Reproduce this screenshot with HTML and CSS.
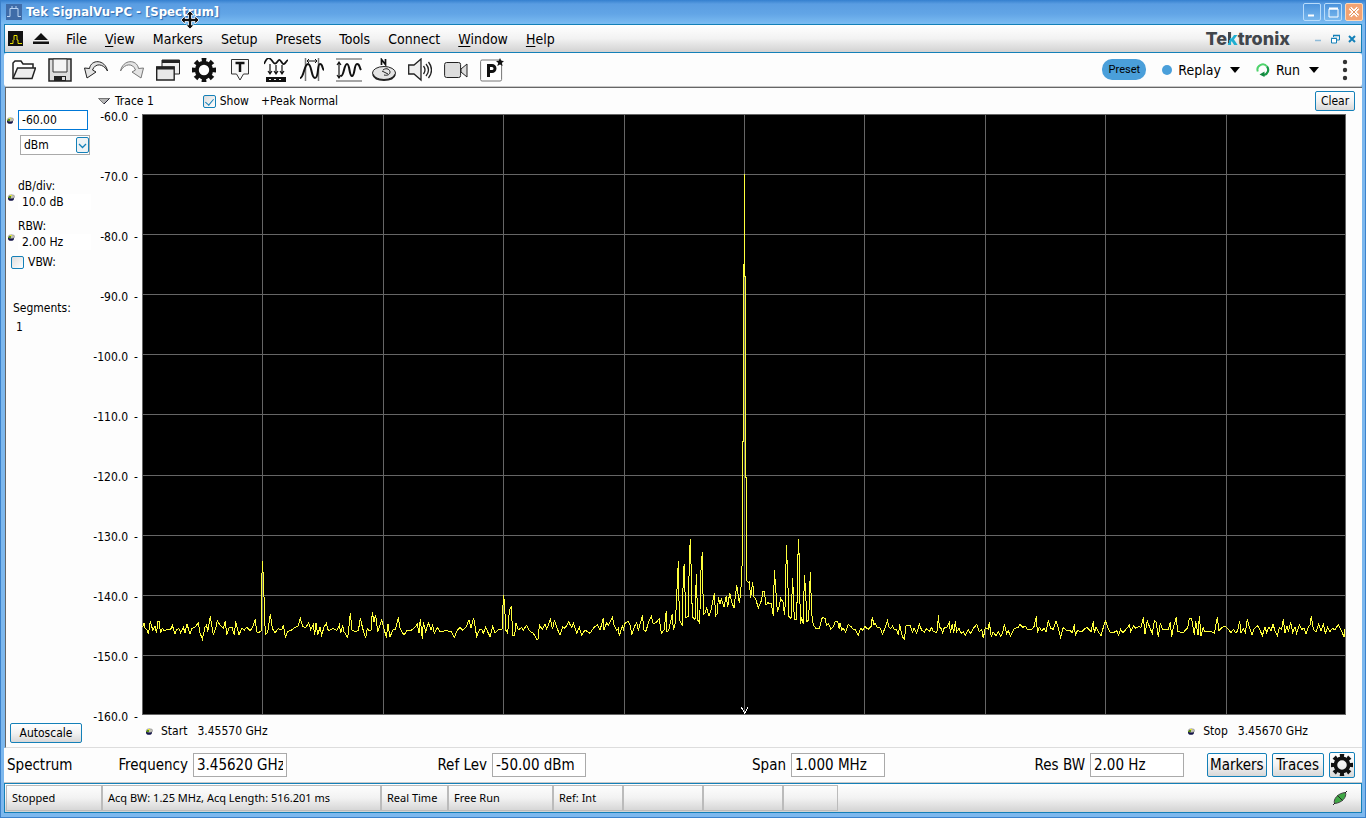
FILE: index.html
```html
<!DOCTYPE html>
<html lang="en">
<head>
<meta charset="utf-8">
<title>Tek SignalVu-PC - [Spectrum]</title>
<link rel="stylesheet" href="styles.css">
</head>
<body>
<svg class="defs" aria-hidden="true">
  <symbol id="gear" viewBox="0 0 24 24">
    <circle cx="12" cy="12" r="7.2" fill="none" stroke="#111" stroke-width="4"/>
    <g fill="#111">
      <path id="tooth" d="M9.500 0h5l-.6 4.500h-3.800z"/>
      <use href="#tooth" transform="rotate(45 12 12)"/><use href="#tooth" transform="rotate(90 12 12)"/>
      <use href="#tooth" transform="rotate(135 12 12)"/><use href="#tooth" transform="rotate(180 12 12)"/>
      <use href="#tooth" transform="rotate(225 12 12)"/><use href="#tooth" transform="rotate(270 12 12)"/>
      <use href="#tooth" transform="rotate(315 12 12)"/>
    </g>
  </symbol>
  <symbol id="knob" viewBox="0 0 8 7">
    <ellipse cx="4" cy="4.400" rx="3" ry="2.300" fill="#14144a"/>
    <ellipse cx="4.500" cy="2.600" rx="3.200" ry="1.900" fill="#c2c2b8" stroke="#777" stroke-width=".5"/>
    <path d="M1 3.500h3M2 2.500h2" stroke="#5f8f14"/><path d="M3 1.500h2" stroke="#e6e630"/>
  </symbol>
</svg>
<div class="window">
  <header class="titlebar">
    <svg class="app-icon" viewBox="0 0 16 16"><rect width="16" height="16" fill="#3f6ca8"/><path d="M1 12.500h3v-8h8v8h3M6 4.500V2M10 4.500V2" fill="none" stroke="#b9d3f2"/></svg>
    <h1 class="title">Tek SignalVu-PC - [Spectrum]</h1>
    <button class="win-btn" aria-label="Minimize"><svg viewBox="0 0 16 16"><path d="M4 11.500h6" stroke="#fff" stroke-width="2"/></svg></button>
    <button class="win-btn" aria-label="Maximize"><svg viewBox="0 0 16 16"><path d="M4 5h9v8H4z" fill="none" stroke="#fff"/><path d="M4 4.500h9" stroke="#fff" stroke-width="2"/></svg></button>
    <button class="win-btn close" aria-label="Close"><svg viewBox="0 0 16 16"><path d="M4 4l8 8M12 4l-8 8" stroke="#fff" stroke-width="3.500"/><path d="M4 4l8 8M12 4l-8 8" stroke="#e0905c" stroke-width="1"/></svg></button>
    <svg class="pointer" viewBox="0 0 18 18"><path d="M9 0l4 4h-2.500v3.500H14V5l4 4-4 4v-2.500h-3.500V14H13l-4 4-4-4h2.500v-3.500H4V13L0 9l4-4v2.500h3.500V4H5z" fill="#111" stroke="#fff" stroke-width=".8"/></svg>
  </header>

  <nav class="menubar">
    <svg class="doc-icon" viewBox="0 0 15 15"><rect width="15" height="15" fill="#111"/><path d="M2 12.500h3V9M6 9V4.500h3V9h1v3.500h4" fill="none" stroke="#e8e000"/></svg>
    <svg class="eject" viewBox="0 0 16 11"><path d="M8 0l7 7H1zM0 8.500h16V11H0z" fill="#111"/></svg>
    <button class="menu">File</button>
    <button class="menu"><u>V</u>iew</button>
    <button class="menu">Markers</button>
    <button class="menu">Setup</button>
    <button class="menu">Presets</button>
    <button class="menu">Tools</button>
    <button class="menu">Connect</button>
    <button class="menu"><u>W</u>indow</button>
    <button class="menu"><u>H</u>elp</button>
    <span class="brand">Te<span class="brand-k">k</span>tronix</span>
    <button class="mdi" aria-label="Minimize view"><svg viewBox="0 0 10 10"><path d="M2 6.500h6" stroke="#8fbbd8" stroke-width="1.500"/></svg></button>
    <button class="mdi" aria-label="Restore view"><svg viewBox="0 0 10 10"><path d="M3.500 3V1.500h6V6H7" fill="none" stroke="#1480b8"/><path d="M3 1.500h7M1 4.500h6" stroke="#1480b8" stroke-width="1.500"/><path d="M1.500 4.500h5V9h-5z" fill="#fff" stroke="#1480b8"/></svg></button>
    <button class="mdi" aria-label="Close view"><svg viewBox="0 0 10 10"><path d="M2 2l6 6M8 2L2 8" stroke="#1480b8" stroke-width="2"/></svg></button>
  </nav>

  <div class="toolbar">
    <button class="tool" aria-label="Open"><svg viewBox="0 0 24 24"><path d="M1 20V5l2-2h6l2 3h10v4" fill="#fff" stroke="#222" stroke-width="1.500"/><path d="M1 20.500L5.500 10H23.500L20 20.500z" fill="#eee" stroke="#222" stroke-width="1.500"/></svg></button>
    <button class="tool" aria-label="Save"><svg viewBox="0 0 24 24"><path d="M1 1h22v22H1z" fill="#ddd" stroke="#222" stroke-width="1.500"/><path d="M5 1h14v13H5z" fill="#f4f4f4" stroke="#333"/><path d="M6 18h12v5H6z" fill="#222"/><path d="M14 19h3v3h-3z" fill="#ddd"/></svg></button>
    <button class="tool" aria-label="Undo"><svg viewBox="0 0 24 24"><path d="M23.500 13C21 1 7 1 5.500 10.500L.5 10l2.500 10 9-6-3.500-2C11 5 19 5 23.500 13z" fill="#e4e4e4" stroke="#222"/></svg></button>
    <button class="tool" aria-label="Redo"><svg viewBox="0 0 24 24"><path d="M.5 13C3 1 17 1 18.500 10.500l5-.5L21 20l-9-6 3.500-2C13 5 5 5 .5 13z" fill="#e4e4e4" stroke="#777"/></svg></button>
    <button class="tool" aria-label="Displays"><svg viewBox="0 0 24 24"><path d="M6 2h17.500v14H6z" fill="#eee" stroke="#222"/><path d="M6 3.500h17.500" stroke="#222" stroke-width="3"/><path d="M.7 9h17.500v13H.7z" fill="#e8e8e8" stroke="#222" stroke-width="1.400"/><path d="M.5 10h18" stroke="#222" stroke-width="3"/></svg></button>
    <button class="tool" aria-label="Settings"><svg viewBox="0 0 24 24"><use href="#gear"/></svg></button>
    <button class="tool" aria-label="Trigger"><svg viewBox="0 0 24 24"><path d="M3.500 1.500h17V16h-5L12 22 8.500 16h-5z" fill="#f7f7f7" stroke="#333"/><path d="M7.500 5h9M12 5v9" stroke="#111" stroke-width="2.500"/></svg></button>
    <button class="tool" aria-label="Acquire"><svg viewBox="0 0 24 24"><path d="M0 6C4-3 6 0 9 4s4-1 6-2 3 5 5 4 2-3 4-4" fill="none" stroke="#111" stroke-width="1.800"/><path d="M6 6v10M12 7v9M18 7v9M4 13l2 3 2-3M10 13l2 3 2-3M16 13l2 3 2-3" fill="none" stroke="#111" stroke-width="1.200"/><path d="M2 19h20v5H2z" fill="#111"/><path d="M5 21.500h15" stroke="#eee" stroke-dasharray="2 3"/></svg></button>
    <button class="tool" aria-label="Analysis time"><svg viewBox="0 0 24 24"><path d="M5.500 0v23M18.500 0v23" stroke="#777" stroke-width="1.500"/><path d="M0 20C4 20 4 6 8 6s3 14 7 14 2-14 5-14 2 5 4 6" fill="none" stroke="#111" stroke-width="2"/><path d="M7 3h10M9 1L7 3l2 2M15 1l2 2-2 2" fill="none" stroke="#111"/></svg></button>
    <button class="tool amplitude" aria-label="Amplitude"><svg viewBox="0 0 26 24"><path d="M0 1h26M0 23h26" stroke="#888" stroke-width="1.500"/><path d="M3 4v16M1 7l2-3 2 3M1 17l2 3 2-3" fill="none" stroke="#111" stroke-width="1.200"/><path d="M5 18C8 18 8 6 11 6s2 12 5 12 2-12 5-12 2 3 4 6" fill="none" stroke="#111" stroke-width="2"/></svg></button>
    <button class="tool" aria-label="Navigation"><svg viewBox="0 0 24 24"><path d="M9.500 7V1.500l4 5V1" fill="none" stroke="#111" stroke-width="1.700"/><ellipse cx="12" cy="15" rx="11.500" ry="6.500" fill="#e4e4e4" stroke="#222"/><path d="M1 16.500c2 7.500 20 7.500 22 0" fill="none" stroke="#222" stroke-width="1.700"/><path d="M11 12c4-3 7 0 7 2s-2 4-6 3M10 13l6 3" fill="none" stroke="#222"/></svg></button>
    <button class="tool" aria-label="Audio"><svg viewBox="0 0 24 24"><path d="M.7 7H6l7-6v21l-7-6H.7z" fill="#eee" stroke="#222" stroke-width="1.300"/><path d="M15.500 8q3 4 0 8M18 6q5 6 0 12M20.500 4q6 8 0 16" fill="none" stroke="#222" stroke-width="1.300"/></svg></button>
    <button class="tool" aria-label="Record"><svg viewBox="0 0 24 24"><rect x=".6" y="4.500" width="16" height="15" rx="2" fill="#ddd" stroke="#222"/><path d="M17 11l6-5v13l-6-5z" fill="#ddd" stroke="#222"/></svg></button>
    <button class="tool" aria-label="Favorite preset"><svg viewBox="0 0 24 24"><rect x=".6" y="2" width="21" height="21" rx="1.500" fill="#fff" stroke="#777"/><path d="M8.500 19V7.500H12a3 3 0 0 1 0 6H9" fill="none" stroke="#111" stroke-width="3"/><path d="M20 0l1.200 2.800 2.800.2-2.200 2 .8 3-2.600-1.600L17.300 8l.9-3L16 3l2.800-.2z" fill="#111"/></svg></button>
    <button class="preset">Preset</button>
    <button class="action replay"><span class="dot"></span>Replay<span class="caret"></span></button>
    <button class="action run"><svg viewBox="0 0 14 14"><path d="M1.800 8.500A5.300 5.300 0 0 1 11 3.500" fill="none" stroke="#4fd36c" stroke-width="2"/><path d="M11 3.500a5.300 5.300 0 0 1-3 8.500" fill="none" stroke="#1a9a48" stroke-width="2.200"/><path d="M8.500 8.500V14L3.500 11.500z" fill="#128a40"/></svg>Run<span class="caret"></span></button>
    <button class="more" aria-label="More"><svg viewBox="0 0 6 22"><circle cx="3" cy="3" r="2.200"/><circle cx="3" cy="11" r="2.200"/><circle cx="3" cy="19" r="2.200"/></svg></button>
  </div>

  <main class="panel">
    <aside class="side">
      <div class="row ref"><svg class="knob"><use href="#knob"/></svg><input class="level" aria-label="Reference level" value="-60.00"></div>
      <div class="unit"><select aria-label="Units"><option>dBm</option></select><svg viewBox="0 0 13 16"><rect x=".5" y=".5" width="12" height="15" rx="1.500" fill="#eef3f6" stroke="#1480b8"/><path d="M3 7l3.500 3.500L10 7" fill="none" stroke="#1480b8" stroke-width="1.300"/></svg></div>
      <div class="param div"><span>dB/div:</span><svg class="knob"><use href="#knob"/></svg><span class="value">10.0 dB</span></div>
      <div class="param"><span>RBW:</span><svg class="knob"><use href="#knob"/></svg><span class="value">2.00 Hz</span></div>
      <label class="vbw"><input type="checkbox">VBW:</label>
      <div class="segments">Segments:</div>
      <div class="count">1</div>
      <button class="button autoscale">Autoscale</button>
    </aside>
    <div class="trace-head">
      <button class="trace"><svg class="expand" viewBox="0 0 12 7"><path d="M.5.5h11L6 6z" fill="#b4b4b4" stroke="#777"/><path d="M11.500.5L6 6" stroke="#223"/></svg>Trace 1</button>
      <label class="show"><input type="checkbox" checked>Show</label>
      <span class="detect">+Peak Normal</span>
      <button class="button clear">Clear</button>
    </div>
    <div class="axis">
      <span>-60.0</span><span>-70.0</span><span>-80.0</span><span>-90.0</span><span>-100.0</span><span>-110.0</span><span>-120.0</span><span>-130.0</span><span>-140.0</span><span>-150.0</span><span>-160.0</span>
    </div>
    <div class="plot">
      <svg viewBox="0 0 3612 1803" preserveAspectRatio="none" role="img" aria-label="Spectrum trace">
        <path class="grid" d="M1 1H3610V1801H1zM1 182H3610M1 362H3610M1 542H3610M1 722H3610M1 902H3610M1 1085H3610M1 1265H3610M1 1445H3610M1 1625H3610M362 1V1801M725 1V1801M1085 1V1801M1448 1V1801M1808 1V1801M2168 1V1801M2531 1V1801M2891 1V1801M3254 1V1801"/>
        <g class="signal">
          <polyline transform="translate(-6 1278)" points="7,262 12,250 15,264 20,268 25,282 31,243 38,270 45,258 50,280 53,245 58,245 61,279 67,265 72,272 85,268 92,268 97,256 105,282 110,268 117,266 122,278 130,262 135,278 141,252 150,283 155,265 165,262 175,248 180,278 187,298 195,262 200,255 203,277 211,229 220,285 228,262 232,242 240,255 250,265 256,243 260,286 268,262 276,262 283,286 287,244 297,285 305,265 313,270 320,262 330,272 338,262 346,238 350,275 356,278 364,272 364,170 367,64 370,110 373,200 376,283 383,278 391,222 397,265 405,278 415,266 425,270 430,254 436,292 443,275 455,270 465,262 475,258 481,235 488,260 498,262 506,248 512,268 520,252 524,285 528,250 533,284 540,262 545,285 552,262 559,250 565,272 580,265 590,272 598,255 602,280 608,255 612,275 623,293 628,250 631,220 636,270 645,275 655,272 661,235 668,265 677,295 682,265 687,272 693,270 697,217 702,245 707,224 713,275 720,255 725,240 730,258 739,293 744,252 750,292 758,270 766,268 775,232 780,265 792,286 800,272 815,270 825,262 832,252 837,280 841,236 847,298 850,245 857,275 865,248 873,270 878,255 883,280 892,262 900,275 920,272 935,276 943,292 952,270 960,262 968,270 978,262 987,240 993,265 1001,233 1010,290 1018,270 1025,268 1030,280 1037,262 1050,290 1058,258 1065,280 1075,268 1086,270 1088,210 1091,166 1094,195 1097,270 1103,280 1108,212 1114,199 1118,285 1124,285 1128,250 1135,270 1145,262 1150,270 1160,256 1168,272 1180,280 1190,298 1195,297 1198,255 1207,268 1215,252 1220,268 1231,238 1238,268 1243,240 1250,262 1260,285 1268,260 1275,265 1286,246 1295,262 1300,250 1310,280 1318,262 1325,285 1335,270 1350,280 1362,262 1372,255 1380,270"/>
          <polyline transform="translate(1374 1218)" points="0,330 10,295 12,330 20,308 25,316 37,292 43,318 50,332 55,325 58,348 67,318 70,328 75,310 85,304 91,318 95,344 103,320 110,308 115,330 121,310 127,286 132,330 138,334 145,308 154,290 160,312 168,308 178,296 184,340 192,330 199,272 201,335 206,332 215,290 217,283 220,330 226,310 230,230 235,123 238,300 247,315 250,150 253,132 257,293 265,290 268,110 271,57 274,165 277,290 285,298 289,162 293,300 299,310 303,150 307,96 310,283 315,280 320,265 327,287 333,270 343,220 347,287 352,280 355,232 360,252 364,238 372,260 379,227 383,262 389,218 395,245 402,265 410,195 413,215 418,248 422,220"/>
          <polyline points="1796,1438 1799,1386 1802,1305 1802,981 1805,981 1805,450 1808,450 1808,180 1808,486 1811,486 1811,1089 1814,1089 1814,1401"/>
          <polyline transform="translate(1374 1218)" points="440,181 446,188 448,183 452,233 458,187 462,230 468,240 475,264 485,240 488,215 493,215 498,255 504,248 508,252 514,250 520,287 523,150 527,205 532,275 537,262 542,235 550,248 553,285 556,250 559,75 563,160 566,288 573,295 578,174 583,300 590,297 595,57 598,120 601,313 605,292 610,312 613,165 617,210 620,305 626,300 631,156 635,280 640,315 648,325 658,325 667,292 675,295 680,316 686,312 692,327 700,320 706,304 713,305 718,328 720,308"/>
          <polyline transform="translate(2094 1428)" points="0,98 5,120 10,115 17,126 25,103 33,110 40,118 45,118 55,136 62,115 68,120 75,110 85,118 93,110 97,82 102,105 105,98 112,112 122,115 127,133 135,115 142,92 147,112 153,115 158,108 163,118 170,118 175,136 179,103 187,140 193,148 198,108 210,105 217,127 222,115 230,130 238,103 245,120 253,127 260,115 268,125 275,112 280,125 290,127 293,112 295,75 298,112 303,115 308,130 313,112 320,112 328,97 331,128 337,102 341,130 346,94 350,125 357,115 363,130 370,125 376,135 385,120 392,130 398,118 410,103 418,125 425,118 430,145 436,112 445,118 448,97 454,142 459,125 468,138 475,125 482,138 488,128 493,103 500,130 505,122 511,139 523,115 535,112 540,103 548,112 557,108 562,118 575,118 582,110 589,79 592,128 598,112 605,122 612,115 618,125 625,91 632,115 640,118 648,94 655,115 662,142 670,112 680,122 690,122 697,128 703,103 706,138 712,122 725,125 732,118 740,112 747,118 753,125 760,94 763,130 768,110 775,125 783,137 790,112 797,92 805,118 812,128 820,128 830,122 836,136 842,118 848,128 858,118 868,105 872,125 880,108 887,115 895,110 903,112 910,82 915,132 922,92 930,115 937,130 943,92 948,95 955,140 961,100 967,118 985,118 991,97 995,142 1000,112 1009,82 1013,125 1030,128 1038,118 1043,115 1048,85 1055,85 1063,136 1067,92 1074,135 1078,79 1083,138 1090,112 1093,125 1115,125 1123,130 1132,82 1137,122 1143,115 1155,108 1165,118 1173,128 1180,118 1187,128 1193,122 1199,94 1203,128 1210,115 1216,128 1222,88 1228,112 1236,134 1243,115 1253,108 1260,120 1267,137 1275,112 1280,128 1287,110 1293,122 1299,103 1306,125 1312,138 1318,112 1325,118 1330,88 1335,128 1341,108 1345,125 1352,97 1358,128 1365,110 1370,130 1378,105 1385,118 1392,115 1398,132 1405,110 1410,105 1414,79 1420,118 1428,125 1436,103 1443,122 1450,103 1456,130 1463,112 1470,125 1477,115 1485,120 1495,103 1502,118 1512,140 1515,118"/>
        </g>
        <path class="center" d="M1798 1780L1808 1798L1818 1780"/>
      </svg>
    </div>
    <div class="range">
      <span class="edge"><svg class="knob"><use href="#knob"/></svg>Start<span>3.45570 GHz</span></span>
      <span class="edge"><svg class="knob"><use href="#knob"/></svg>Stop<span>3.45670 GHz</span></span>
    </div>
  </main>

  <form class="settings">
    <div class="first"><span>Spectrum</span><label>Frequency<input value="3.45620 GHz"></label></div>
    <label>Ref Lev<input value="-50.00 dBm"></label>
    <label>Span<input value="1.000 MHz"></label>
    <label>Res BW<input value="2.00 Hz"></label>
    <div class="actions">
      <button type="button" class="button">Markers</button>
      <button type="button" class="button">Traces</button>
      <button type="button" class="button gear" aria-label="Spectrum settings"><svg viewBox="0 0 24 24"><use href="#gear"/></svg></button>
    </div>
  </form>

  <footer class="status">
    <span class="c1">Stopped</span><span class="c2">Acq BW: 1.25 MHz, Acq Length: 516.201 ms</span><span class="c3">Real Time</span><span class="c4">Free Run</span><span class="c5">Ref: Int</span><span class="c6"></span><span class="c6"></span><span class="c7"></span>
    <svg class="link" viewBox="0 0 14 14"><path d="M1.500 12.500C0 8 5 2 12.500 1.500 14 6 9 12 1.500 12.500z" fill="#3fa845" stroke="#444"/><path d="M0 14l2-2M12 2l2-2M4.500 4.500l5 5" stroke="#222"/></svg>
  </footer>
</div>
</body>
</html>
```

FILE: styles.css
```css
* { box-sizing: border-box; }
body {
  margin: 0;
  font: 12px/16px "DejaVu Sans Condensed", "DejaVu Sans", sans-serif;
  font-stretch: condensed;
  color: #000;
}
button, input, select { font: inherit; font-stretch: inherit; color: inherit; margin: 0; }
button { border: 0; background: none; padding: 0; }
svg { display: block; }
.defs { position: absolute; width: 0; height: 0; }

.window {
  min-height: 100vh;
  display: flex;
  flex-direction: column;
  padding: 0 3px 4px;
  background: #7db8ee;
  border: 1px solid #3c82cc;
  border-top: 0;
}

.titlebar {
  position: relative;
  display: flex;
  align-items: center;
  height: 24px;
  margin: 0 -3px;
  padding: 0 2px 0 5px;
  gap: 3px;
  background: linear-gradient(#3580cf, #5a9de2 4px, #62a5e6 14px, #7bbcf2);
}
.app-icon { width: 16px; height: 16px; }
.title {
  flex: 1;
  margin: 0 0 0 1px;
  font-size: 13px;
  line-height: 16px;
  color: #fff;
  text-shadow: 1px 1px 1px #2a66ad;
}
.win-btn {
  width: 18px;
  height: 18px;
  border: 1px solid #b8dcfb;
  border-radius: 2px;
  background: linear-gradient(#4b93dc, #79b8ee);
}
.win-btn.close { background: #f3a373; border-color: #ffd9b8; }
.pointer { position: absolute; left: 180px; top: 11px; width: 18px; height: 18px; z-index: 1; }

.menubar {
  display: flex;
  align-items: center;
  height: 29px;
  padding: 0 4px 0 3px;
  border: 1px solid #1480b8;
  background: linear-gradient(#fff, #f2f2f2 50%, #d2d2d2);
}
.doc-icon { width: 15px; height: 15px; }
.eject { width: 16px; height: 11px; margin: 0 8px 0 10px; }
.menu { font-size: 14px; line-height: 20px; padding: 0 9px; }
.menu u { text-underline-offset: 2px; }
.brand {
  margin: 0 16px 0 auto;
  font: 800 18px/20px Inter, "Open Sans", sans-serif;
  color: #42464c;
}
.brand-k {
  background: linear-gradient(115deg, #42464c 40%, #21aed0 40%);
  background-clip: text;
  color: transparent;
}
.mdi { width: 10px; height: 10px; margin-left: 7px; }

.toolbar {
  display: flex;
  align-items: center;
  height: 34px;
  padding: 0 14px 0 8px;
  background: #fdfdfd;
  border-bottom: 1px solid #c8c8c8;
  border-radius: 3px;
}
.tool { width: 24px; height: 24px; margin-right: 12px; }
.tool.amplitude { width: 26px; margin-right: 10px; }
.preset {
  width: 44px;
  height: 21px;
  margin-left: auto;
  border-radius: 10px;
  background: #4a9fda;
  font: 11px/21px Roboto, sans-serif;
}
.action { display: flex; align-items: center; font-size: 14px; line-height: 20px; }
.replay { margin-left: 16px; }
.run { margin-left: 16px; }
.run svg { width: 14px; height: 14px; margin-right: 6px; }
.dot { width: 10px; height: 10px; margin-right: 6px; border-radius: 50%; background: #4a9fda; }
.caret { margin-left: 9px; border: 5px solid transparent; border-top: 6px solid #000; border-bottom: 0; }
.more { width: 6px; height: 22px; margin-left: 23px; fill: #333; }

.panel {
  flex: 1;
  display: grid;
  grid-template: 26px minmax(300px, 1fr) 32px / 84px 52px minmax(0, 1fr);
  margin-left: 1px;
  padding-right: 16px;
  background: #fdfdfd;
  border-top: 1px solid #666;
  border-left: 1px solid #666;
  border-bottom: 1px solid #ddd;
}
.knob { width: 8px; height: 7px; }
.side { grid-row: 1 / 4; display: flex; flex-direction: column; align-items: flex-start; padding: 22px 0 4px; }
.row { display: flex; align-items: center; }
.level {
  width: 70px;
  height: 20px;
  margin-left: 4px;
  padding: 0 3px;
  border: 1px solid #0078d7;
  background: #fff;
}
.unit { position: relative; width: 70px; height: 20px; margin: 5px 0 0 14px; }
.unit select {
  appearance: none;
  width: 100%;
  height: 100%;
  padding: 0 3px;
  border: 1px solid #aaa;
  border-radius: 0;
  background: #fff;
}
.unit svg { position: absolute; right: 1px; top: 2px; width: 13px; height: 16px; pointer-events: none; }
.param { display: grid; grid-template-columns: 8px 1fr; column-gap: 3px; align-items: start; margin-left: 1px; width: 84px; margin-bottom: 8px; }
.param > span:first-child { grid-column: 2; }
.div { margin-top: 23px; }
.value { padding-left: 4px; background: #fff; }
.vbw { display: flex; align-items: center; gap: 4px; margin: -4px 0 0 5px; }
input[type="checkbox"] {
  appearance: none;
  width: 13px;
  height: 13px;
  border: 1px solid #1480b8;
  border-radius: 2px;
  background: linear-gradient(135deg, #ddd, #fff);
}
input[type="checkbox"]:checked::before {
  content: "";
  display: block;
  width: 4px;
  height: 7px;
  margin: 1px 0 0 3px;
  border: solid #1480b8;
  border-width: 0 1px 1px 0;
  rotate: 40deg;
}
.segments { margin: 30px 0 0 7px; }
.count { margin: 3px 0 0 10px; }
.button {
  border: 1px solid #1480b8;
  border-radius: 2px;
  background: linear-gradient(#fff, #f2f2f2 50%, #d8d8d8);
}
.autoscale { width: 72px; height: 20px; margin: auto 0 0 4px; }

.trace-head { grid-column: 2 / 4; display: flex; align-items: center; margin-right: -9px; }
.trace { display: flex; align-items: center; margin-left: 8px; }
.expand { width: 12px; height: 7px; margin-right: 5px; }
.show { display: flex; align-items: center; gap: 4px; margin-left: 49px; }
.detect { margin-left: 12px; }
.clear { width: 40px; height: 20px; margin-left: auto; }

.axis {
  grid-column: 2;
  display: flex;
  flex-direction: column;
  justify-content: space-between;
  margin: -5px 4px -10px 0;
  text-align: right;
  white-space: nowrap;
}
.axis span::after { content: "-"; margin-left: 6px; }
.plot { position: relative; background: #000; }
.plot svg { position: absolute; inset: 0; width: 100%; height: 100%; shape-rendering: crispEdges; }
.plot path, .plot polyline { fill: none; stroke-width: 1; vector-effect: non-scaling-stroke; }
.grid { stroke: #666; }
.signal { stroke: #ffff3c; }
.center { stroke: #fff; }
.range { grid-column: 3; display: flex; justify-content: space-between; align-items: center; padding: 0 38px 0 3px; }
.edge { display: flex; align-items: center; }
.edge .knob { margin-right: 8px; }
.edge span { margin-left: 10px; }

.settings {
  display: grid;
  grid-template-columns: 283px 1fr 1fr 1fr 178px;
  align-items: center;
  height: 35px;
  background: #fdfdfd;
  border-bottom: 1px solid #c8c8c8;
  font-size: 15px;
  line-height: 20px;
}
.first { display: flex; justify-content: space-between; align-items: center; padding-left: 3px; }
.settings label { display: flex; justify-content: flex-end; align-items: center; gap: 5px; }
.settings input { width: 94px; height: 24px; padding: 0 3px; border: 1px solid #aaa; background: #fff; }
.actions { display: flex; gap: 5px; padding-left: 23px; }
.actions .button { min-width: 52px; height: 24px; padding: 0 2px; }
.actions .gear { min-width: 26px; height: 26px; margin-top: -1px; padding: 0 1px; }
.gear svg { width: 22px; height: 22px; }

.status {
  display: flex;
  height: 30px;
  padding: 1px 14px 1px 1px;
  border: 1px solid #1480b8;
  background: linear-gradient(#fff, #f2f2f2 50%, #d2d2d2);
  font: 11px/24px "Noto Sans", sans-serif;
}
.status span { border: 1px solid #bbb; padding-left: 5px; white-space: nowrap; }
.c1 { width: 96px; }
.c2 { width: 279px; }
.c3 { width: 67px; }
.c4 { width: 105px; }
.c5 { width: 70px; }
.c6 { width: 80px; }
.c7 { width: 55px; }
.link { width: 14px; height: 14px; margin: 6px 0 0 auto; }
```
